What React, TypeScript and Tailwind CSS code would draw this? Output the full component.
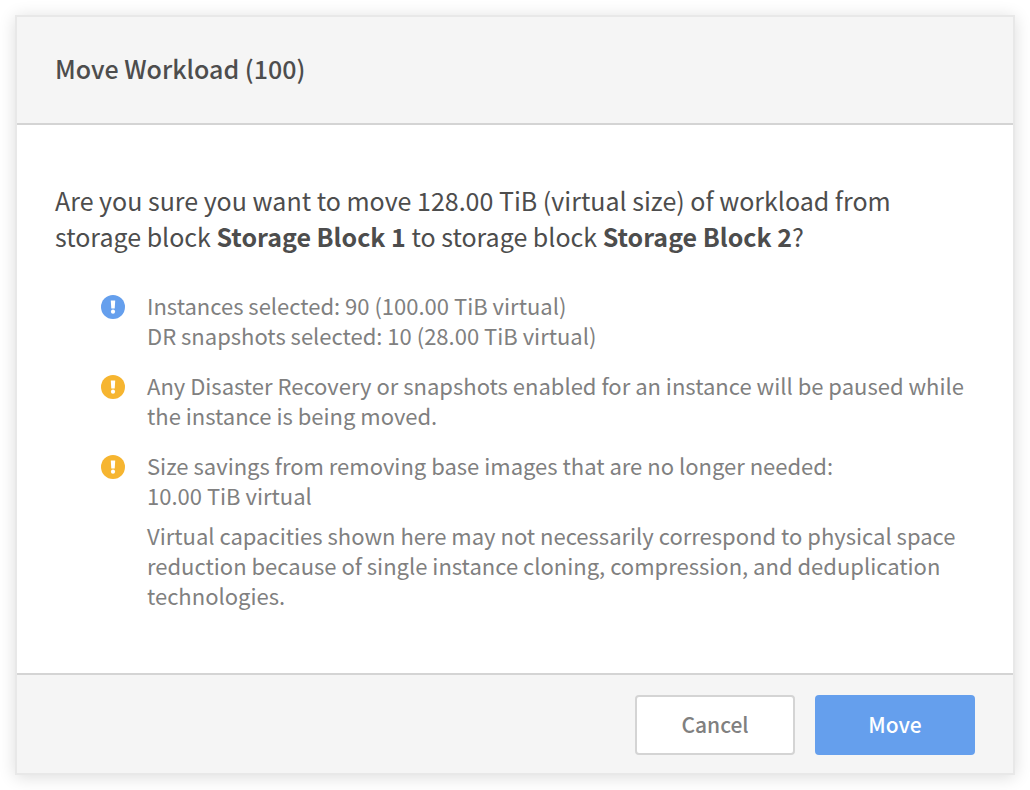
import React from 'react';

function NoticeIcon({ className }: { className: string }) {
  return (
    <svg viewBox="0 0 24 24" className={`w-6 h-6 shrink-0 mt-[5px] ${className}`} aria-hidden="true">
      <circle cx="12" cy="12" r="12" fill="currentColor" />
      <path d="M9.8 5.6h4.4l-.5 8h-3.4z" fill="#fff" />
      <circle cx="12" cy="16.7" r="2.1" fill="#fff" />
    </svg>
  );
}

function Notice({ color, children }: { color: string; children: React.ReactNode }) {
  return (
    <li className="flex gap-[22px]">
      <NoticeIcon className={color} />
      <div className="flex-1">{children}</div>
    </li>
  );
}

export default function App() {
  return (
    <div className="bg-white p-[15px] font-['Noto_Sans_CJK_SC','Noto_Sans',sans-serif]">
      <div
        role="dialog"
        aria-labelledby="dialog-title"
        className="border-2 border-[#e8e8e8] bg-white shadow-[0_2px_16px_rgba(0,0,0,0.14)]"
      >
        <header className="border-b-2 border-[#d4d4d4] bg-[#f5f5f5] px-[38px] pt-[33px] pb-[37px]">
          <h1 id="dialog-title" className="text-[25px] leading-9 font-medium text-[#4d4d4d]">
            Move Workload (100)
          </h1>
        </header>

        <main className="px-[38px] pt-[57px] pb-[63px]">
          <p className="text-[25px] leading-9 text-[#4d4d4d]">
            Are you sure you want to move 128.00 TiB (virtual size) of workload from storage block{' '}
            <strong className="font-bold">Storage Block 1</strong> to storage block{' '}
            <strong className="font-bold">Storage Block 2</strong>?
          </p>

          <ul className="mt-9 ml-[46px] space-y-5 text-[22px] leading-[30px] text-[#808080]">
            <Notice color="text-[#659fed]">
              <p>Instances selected: 90 (100.00 TiB virtual)</p>
              <p>DR snapshots selected: 10 (28.00 TiB virtual)</p>
            </Notice>
            <Notice color="text-[#f6b530]">
              <p>
                Any Disaster Recovery or snapshots enabled for an instance will be paused while the
                instance is being moved.
              </p>
            </Notice>
            <Notice color="text-[#f6b530]">
              <p>Size savings from removing base images that are no longer needed:</p>
              <p>10.00 TiB virtual</p>
              <p className="mt-[10px]">
                Virtual capacities shown here may not necessarily correspond to physical space
                reduction because of single instance cloning, compression, and deduplication
                technologies.
              </p>
            </Notice>
          </ul>
        </main>

        <footer className="flex justify-end gap-5 border-t-2 border-[#d4d4d4] bg-[#f5f5f5] px-[38px] pt-5 pb-[18px]">
          <button
            type="button"
            className="w-40 h-[60px] rounded border-2 border-[#d4d4d4] bg-white text-[21px] font-medium text-[#808080]"
          >
            Cancel
          </button>
          <button
            type="button"
            className="w-40 h-[60px] rounded bg-[#659fed] text-[21px] font-medium text-white"
          >
            Move
          </button>
        </footer>
      </div>
    </div>
  );
}
